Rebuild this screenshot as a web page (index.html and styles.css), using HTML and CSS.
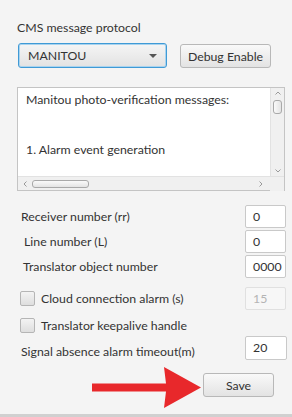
FILE: index.html
```html
<!DOCTYPE html>
<html>
<head>
<meta charset="utf-8">
<link rel="stylesheet" href="styles.css">
</head>
<body>
<div class="page">
  <div class="panel">
    <div class="title">CMS message protocol</div>
    <div class="proto-row">
      <div class="combo"><span class="combo-text">MANITOU</span><span class="caret"></span></div>
      <div class="btn debug">Debug Enable</div>
    </div>
    <div class="textarea">
      <div class="ta-main">
        <div class="ta-content">
          <div class="ta-line">Manitou photo-verification messages:</div>
          <div class="ta-line">&nbsp;</div>
          <div class="ta-line">&nbsp;</div>
          <div class="ta-line">1. Alarm event generation</div>
        </div>
        <div class="vscroll">
          <svg class="sarrow" width="14" height="10" viewBox="0 0 14 10"><path d="M4.5 6.5 L7 4 L9.5 6.5" fill="none" stroke="#9a9a9a" stroke-width="1"/></svg>
          <div class="vthumb"></div>
          <div class="vspacer"></div>
          <svg class="sarrow" width="14" height="10" viewBox="0 0 14 10"><path d="M4.5 3.5 L7 6 L9.5 3.5" fill="none" stroke="#9a9a9a" stroke-width="1"/></svg>
        </div>
      </div>
      <div class="hscroll">
        <svg class="sarrow" width="10" height="14" viewBox="0 0 10 14"><path d="M6.5 4.5 L4 7 L6.5 9.5" fill="none" stroke="#9a9a9a" stroke-width="1"/></svg>
        <div class="hthumb"></div>
        <div class="hspacer"></div>
        <svg class="sarrow" width="10" height="14" viewBox="0 0 10 14"><path d="M3.5 4.5 L6 7 L3.5 9.5" fill="none" stroke="#9a9a9a" stroke-width="1"/></svg>
        <div class="corner"></div>
      </div>
    </div>

    <div class="fields">
      <div class="row r1">
        <span class="lbl l1">Receiver number (rr)</span>
        <div class="input">0</div>
      </div>
      <div class="row r2">
        <span class="lbl l2">Line number (L)</span>
        <div class="input">0</div>
      </div>
      <div class="row r3">
        <span class="lbl l3">Translator object number</span>
        <div class="input">0000</div>
      </div>
      <div class="row cloud">
        <span class="check-wrap"><span class="check"></span><span class="lbl">Cloud connection alarm (s)</span></span>
        <div class="input disabled">15</div>
      </div>
      <div class="row keep">
        <span class="check-wrap"><span class="check"></span><span class="lbl">Translator keepalive handle</span></span>
      </div>
      <div class="row signal">
        <span class="lbl l4">Signal absence alarm timeout(m)</span>
        <div class="input tall">20</div>
      </div>
    </div>

    <div class="save-row">
      <div class="btn save">Save</div>
    </div>
  </div>
  <svg class="arrow" width="114" height="44" viewBox="0 0 114 44">
    <path d="M2 17.5 L76 17.5 L74 1 L111 21.5 L74 42 L76 25.5 L2 25.5 Z" fill="#e8282b"/>
  </svg>
</div>
</body>
</html>
```

FILE: styles.css
```css
* { box-sizing: border-box; }
html, body { margin: 0; padding: 0; }
body {
  background: #f4f4f4;
  font-family: Lato, "Open Sans", sans-serif;
  font-size: 12px;
  color: #333333;
}
.page {
  position: relative;
  width: 292px;
  height: 417px;
  border-bottom: 3px solid #d0d0d0;
  overflow: hidden;
}
.panel {
  display: flex;
  flex-direction: column;
  padding: 20px 0 0 17px;
  width: 286px;
}
.title {
  height: 16px;
  line-height: 16px;
  font-size: 12.3px;
}
.proto-row {
  display: flex;
  align-items: flex-start;
  margin-top: 7px;
}
.combo {
  margin-left: 1px;
  width: 149px;
  height: 25px;
  border: 1px solid #3f9ad6;
  border-radius: 3px;
  background: linear-gradient(#f5f5f5, #e2e2e2);
  box-shadow: inset 0 0 0 1px #a9d3ee;
  display: flex;
  align-items: center;
  justify-content: space-between;
  padding: 0 9px 0 9px;
}
.combo-text { font-size: 12.3px; color: #333; }
.caret {
  width: 0; height: 0;
  border-left: 4px solid transparent;
  border-right: 4px solid transparent;
  border-top: 4px solid #555;
  margin-top: 1px;
}
.btn {
  height: 24px;
  border: 1px solid #b8b8b8;
  border-radius: 3px;
  background: linear-gradient(#f9f9f9, #e3e3e3);
  display: flex;
  align-items: center;
  justify-content: center;
  font-size: 12.3px;
  color: #333;
}
.debug {
  margin-left: 13px;
  margin-top: 1px;
  width: 91px;
}
.textarea {
  margin-top: 19px;
  width: 268px;
  height: 104px;
  border: 1px solid #c4c4c4;
  background: #ffffff;
  display: flex;
  flex-direction: column;
}
.ta-main {
  flex: 1;
  display: flex;
  min-height: 0;
}
.ta-content {
  flex: 1;
  padding: 4px 0 0 8px;
  overflow: hidden;
  white-space: nowrap;
}
.ta-line {
  height: 16.7px;
  line-height: 16.7px;
  font-size: 12.3px;
}
.vscroll {
  width: 14px;
  background: #f0f0f0;
  border-left: 1px solid #e2e2e2;
  display: flex;
  flex-direction: column;
  align-items: center;
}
.sarrow { display: block; flex: none; }
.vthumb {
  width: 9px;
  height: 14px;
  margin-top: 2px;
  border: 1px solid #a9a9a9;
  border-radius: 3px;
  background: linear-gradient(90deg, #fafafa, #e4e4e4);
}
.vspacer { flex: 1; }
.hscroll {
  height: 14px;
  background: #f0f0f0;
  border-top: 1px solid #e2e2e2;
  display: flex;
  align-items: center;
  padding-left: 2px;
}
.hthumb {
  width: 57px;
  height: 8px;
  margin-left: 2px;
  border: 1px solid #a9a9a9;
  border-radius: 3px;
  background: linear-gradient(#fafafa, #e4e4e4);
}
.hspacer { flex: 1; }
.corner { width: 14px; height: 14px; background: #f0f0f0; margin-left: 4px; }
.fields {
  display: flex;
  flex-direction: column;
  margin-top: 14px;
  width: 269px;
}
.row {
  display: flex;
  align-items: center;
  justify-content: space-between;
}
.r1 { height: 23px; }
.r2 { height: 23px; margin-top: 2px; }
.r3 { height: 23px; margin-top: 2px; }
.cloud { height: 23px; margin-top: 9px; }
.keep { height: 15px; margin-top: 8px; }
.signal { height: 24px; margin-top: 3px; }
.lbl { font-size: 12.3px; white-space: nowrap; }
.l1 { margin-left: 4px; }
.l2 { margin-left: 7px; }
.l3 { margin-left: 6px; }
.l4 { margin-left: 4px; margin-top: 6px; }
.input {
  width: 41px;
  height: 23px;
  background: #ffffff;
  border: 1px solid #c9c9c9;
  border-radius: 2px;
  padding-left: 7px;
  display: flex;
  align-items: center;
  font-size: 12.3px;
  color: #333;
}
.input.tall { height: 24px; width: 42px; margin-right: -1px; align-items: flex-start; padding-top: 3px; }
.input.disabled {
  background: #f7f7f7;
  border-color: #e0e0e0;
  color: #b4b4b4;
}
.check-wrap {
  display: flex;
  align-items: center;
  margin-left: 3px;
}
.check {
  width: 15px;
  height: 15px;
  border: 1px solid #b5b5b5;
  border-radius: 2px;
  background: linear-gradient(#f3f3f3, #dedede);
  margin-right: 6px;
}
.save-row {
  display: flex;
  margin-top: 13px;
  padding-left: 186px;
}
.save {
  width: 71px;
  height: 24px;
}
.arrow {
  position: absolute;
  left: 90px;
  top: 366px;
}
```
